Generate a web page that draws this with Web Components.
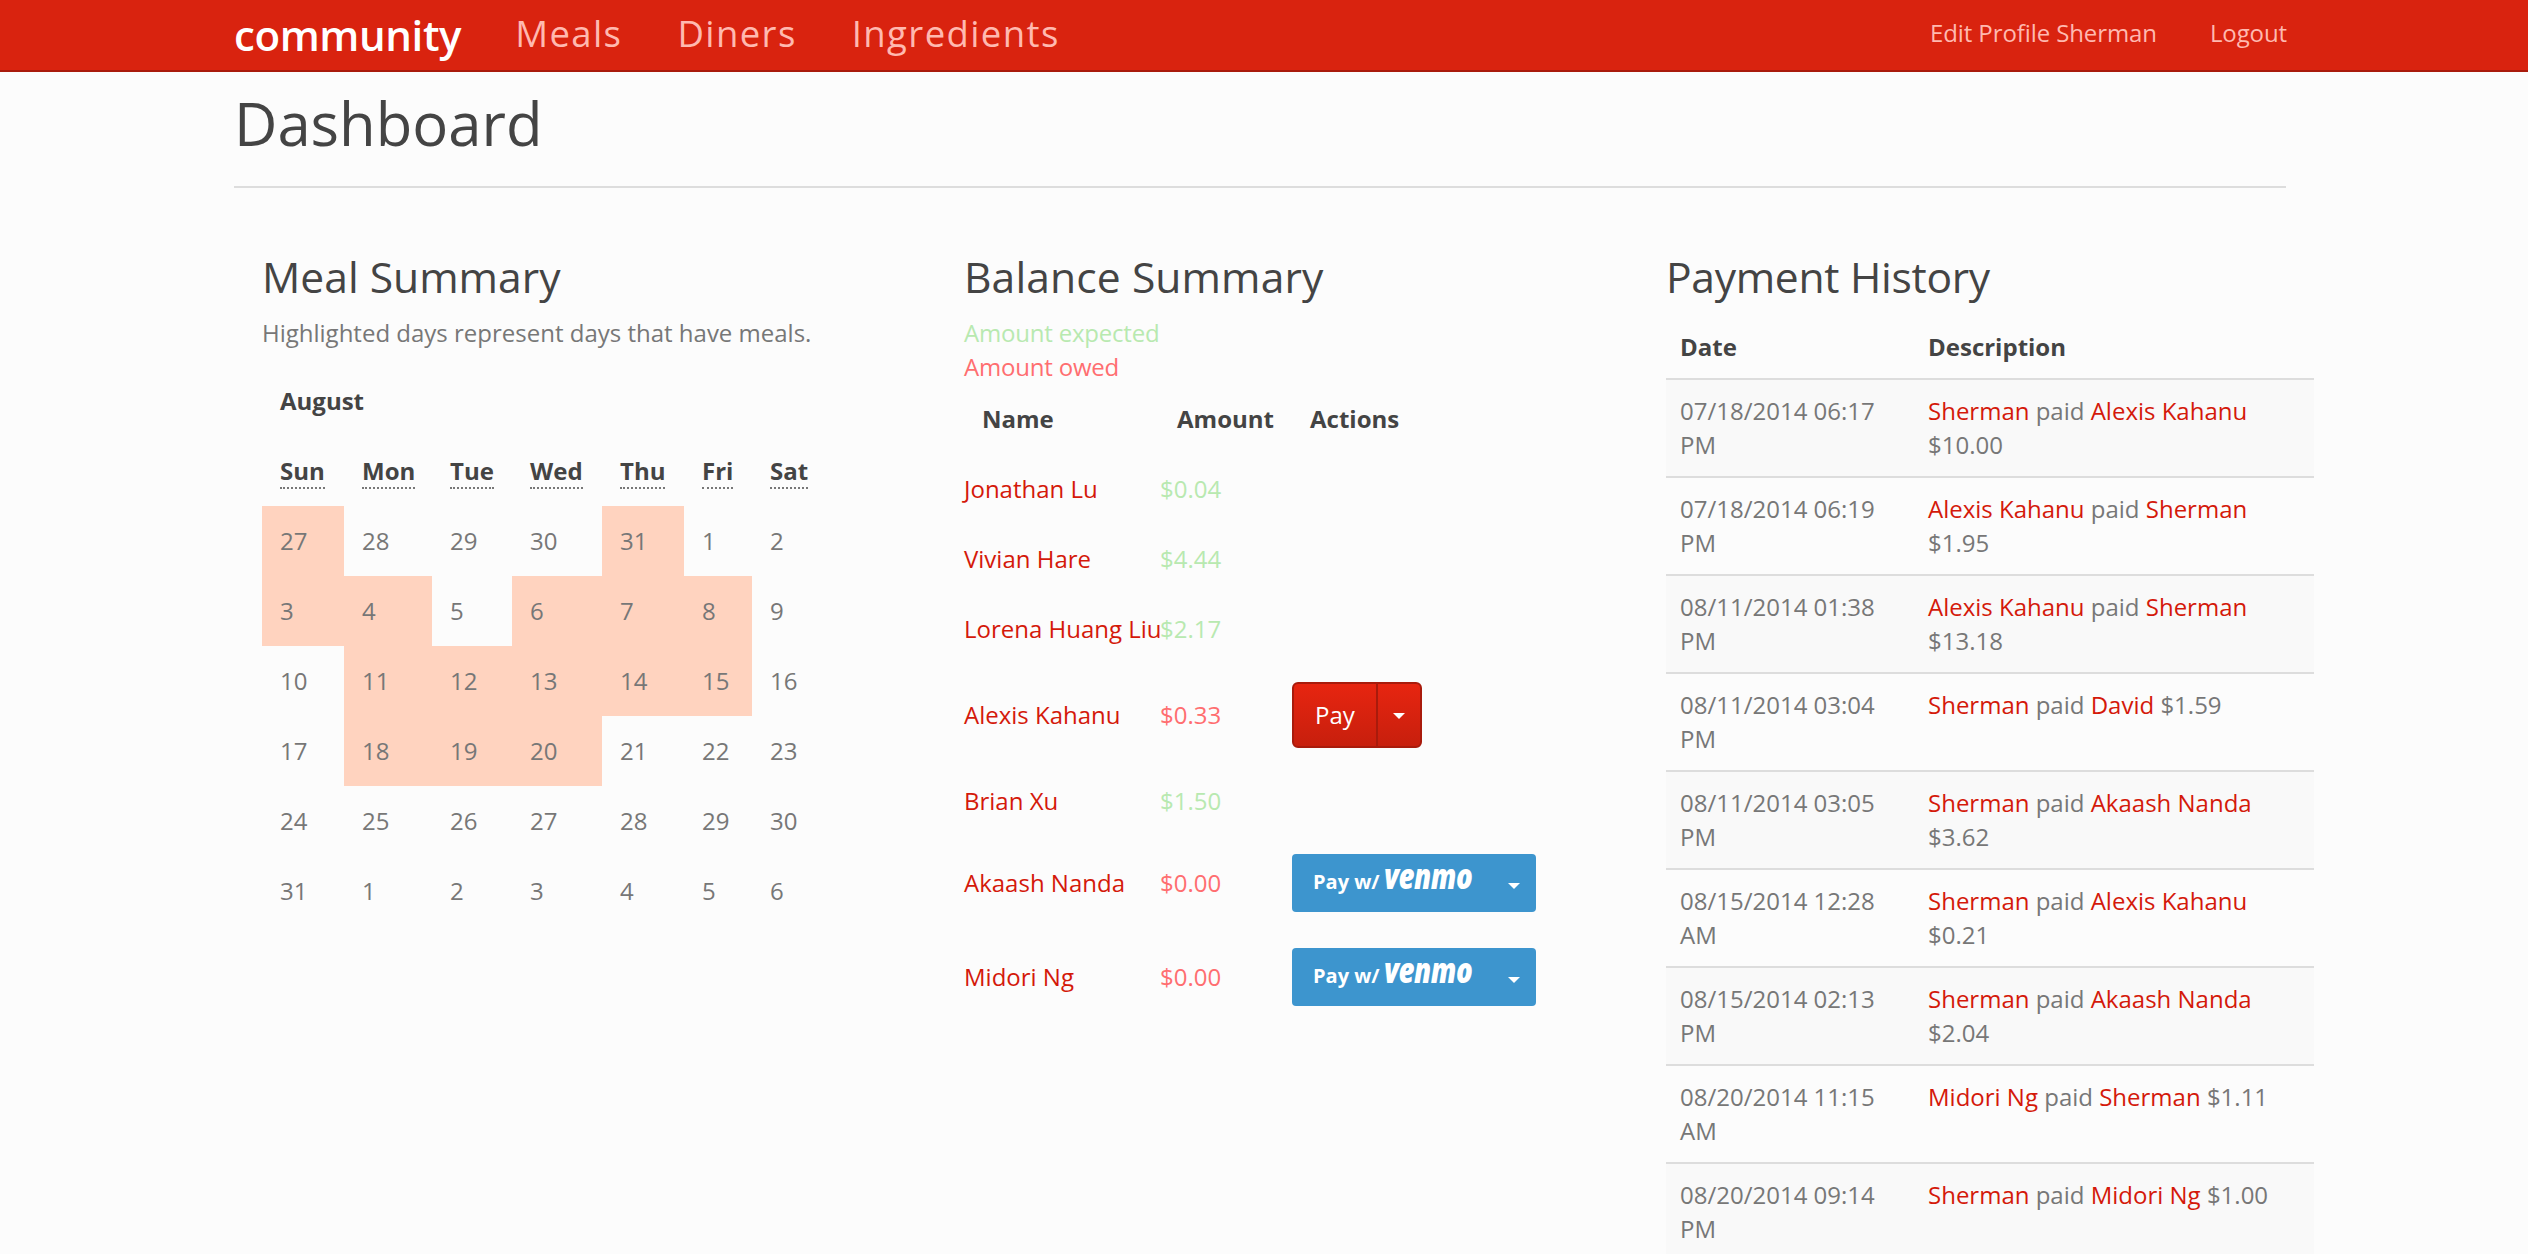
<!DOCTYPE html>
<html>
<head>
<meta charset="utf-8">
<title>Dashboard</title>
<style>
    html, body {
        margin: 0;
        padding: 0;
        height: 1254px;
        overflow: hidden;
        background-color: #fcfcfc;
        color: #777;
        font-family: "Open Sans", "Liberation Sans", sans-serif;
        font-size: 24px;
        line-height: 34px;
    }
    main {
        display: block;
        padding-left: 234px;
    }
</style>
</head>
<body>
<app-navbar></app-navbar>
<main>
    <page-header>Dashboard</page-header>
    <dash-columns>
        <meal-summary></meal-summary>
        <balance-summary></balance-summary>
        <payment-history></payment-history>
    </dash-columns>
</main>

<script>
class AppNavbar extends HTMLElement {
    connectedCallback() {
        this.attachShadow({ mode: 'open' });
        this.shadowRoot.innerHTML = `
            <style>
                :host {
                    display: block;
                    background-color: #d9230f;
                    border-bottom: 2px solid #a91b0c;
                    height: 70px;
                }
                nav {
                    display: flex;
                    align-items: flex-start;
                    width: 2053px;
                    margin-left: 234px;
                    height: 70px;
                }
                a { text-decoration: none; color: #ffb9b0; }
                .brand {
                    color: #fff;
                    font-size: 42px;
                    font-weight: 600;
                    line-height: 70px;
                    margin-right: 54px;
                    letter-spacing: -0.4px;
                }
                .main-links { display: flex; gap: 55px; font-size: 36.5px; line-height: 67px; letter-spacing: 1.4px; }
                .right { display: flex; gap: 53px; margin-left: auto; font-size: 24px; line-height: 65px; letter-spacing: -0.1px; }
            </style>
            <nav>
                <a class="brand" href="#">community</a>
                <div class="main-links">
                    <a href="#">Meals</a>
                    <a href="#">Diners</a>
                    <a href="#">Ingredients</a>
                </div>
                <div class="right">
                    <a href="#">Edit Profile Sherman</a>
                    <a href="#">Logout</a>
                </div>
            </nav>
        `;
    }
}

class PageHeader extends HTMLElement {
    connectedCallback() {
        this.attachShadow({ mode: 'open' });
        this.shadowRoot.innerHTML = `
            <style>
                :host {
                    display: block;
                    width: 2052px;
                    height: 96px;
                    border-bottom: 2px solid #ddd;
                    color: #444;
                    font-size: 59.8px;
                    line-height: 66px;
                    padding-top: 18px;
                }
            </style>
            <slot></slot>
        `;
    }
}

class DashColumns extends HTMLElement {
    connectedCallback() {
        this.attachShadow({ mode: 'open' });
        this.shadowRoot.innerHTML = `
            <style>
                :host {
                    display: grid;
                    grid-template-columns: repeat(3, 702px);
                    width: 2106px;
                    padding-top: 58px;
                }
                ::slotted(*) { padding: 0 28px; }
            </style>
            <slot></slot>
        `;
    }
}

const HEADING_CSS = `
    h3 {
        margin: 0;
        height: 70px;
        color: #444;
        font-size: 42.6px;
        font-weight: 400;
        line-height: 60px;
    }
    a { color: #d4190a; text-decoration: none; }
    table { border-collapse: collapse; border-spacing: 0; table-layout: fixed; }
    th { color: #444; font-weight: 700; text-align: left; }
`;

class MealSummary extends HTMLElement {
    connectedCallback() {
        const days = ['Sun', 'Mon', 'Tue', 'Wed', 'Thu', 'Fri', 'Sat'];
        const weeks = [
            [[27, 1], [28], [29], [30], [31, 1], [1], [2]],
            [[3, 1], [4, 1], [5], [6, 1], [7, 1], [8, 1], [9]],
            [[10], [11, 1], [12, 1], [13, 1], [14, 1], [15, 1], [16]],
            [[17], [18, 1], [19, 1], [20, 1], [21], [22], [23]],
            [[24], [25], [26], [27], [28], [29], [30]],
            [[31], [1], [2], [3], [4], [5], [6]]
        ];
        this.attachShadow({ mode: 'open' });
        this.shadowRoot.innerHTML = `
            <style>
                :host { display: block; }
                ${HEADING_CSS}
                p { margin: 0 0 16px; }
                table { width: 564px; }
                th, td { padding: 18px; line-height: 34px; }
                .meal { background-color: #ffd3bf; }
                abbr { border-bottom: 2px dotted #777; text-decoration: none; }
            </style>
            <h3>Meal Summary</h3>
            <p>Highlighted days represent days that have meals.</p>
            <table>
                <colgroup>
                    <col style="width:82px"><col style="width:88px"><col style="width:80px"><col style="width:90px"><col style="width:82px"><col style="width:68px"><col style="width:74px">
                </colgroup>
                <thead>
                    <tr><th colspan="7">August</th></tr>
                    <tr>${days.map(d => `<th><abbr>${d}</abbr></th>`).join('')}</tr>
                </thead>
                <tbody>
                    ${weeks.map(w => `<tr>${w.map(c => `<td class="${c[1] ? 'meal' : ''}">${c[0]}</td>`).join('')}</tr>`).join('')}
                </tbody>
            </table>
        `;
    }
}

class PayButton extends HTMLElement {
    connectedCallback() {
        this.attachShadow({ mode: 'open' });
        this.shadowRoot.innerHTML = `
            <style>
                :host {
                    display: inline-flex;
                    vertical-align: top;
                    height: 66px;
                    width: 130px;
                    box-sizing: border-box;
                    border: 2px solid #a91b0c;
                    border-radius: 6px;
                    background: linear-gradient(#e72510, #c71f0d);
                    color: #fff;
                    line-height: 62px;
                    font-weight: 500;
                    overflow: hidden;
                }
                .label { width: 82px; text-align: center; border-right: 2px solid #a91b0c; }
                .toggle { flex: 1; display: flex; align-items: center; justify-content: center; }
                i { border-top: 6px solid #fff; border-left: 6px solid transparent; border-right: 6px solid transparent; margin-top: 2px; }
            </style>
            <div class="label"><slot></slot></div>
            <div class="toggle"><i></i></div>
        `;
    }
}

class VenmoButton extends HTMLElement {
    connectedCallback() {
        this.attachShadow({ mode: 'open' });
        this.shadowRoot.innerHTML = `
            <style>
                :host {
                    display: inline-flex;
                    vertical-align: top;
                    align-items: baseline;
                    height: 58px;
                    width: 244px;
                    box-sizing: border-box;
                    padding-left: 21px;
                    border-radius: 4px;
                    background-color: #3d95ce;
                    color: #fff;
                    line-height: 44px;
                    position: relative;
                }
                .pay { font-size: 20px; font-weight: 700; white-space: pre; }
                .logo {
                    display: inline-block;
                    font-size: 35px;
                    font-weight: 800;
                    font-style: italic;
                    letter-spacing: -0.6px;
                    margin-left: 4px;
                    transform: scaleX(0.79);
                    transform-origin: 0 100%;
                }
                i {
                    position: absolute;
                    right: 16px;
                    top: 29px;
                    border-top: 6px solid #fff;
                    border-left: 6px solid transparent;
                    border-right: 6px solid transparent;
                }
            </style>
            <span class="pay">Pay w/</span><span class="logo">venmo</span><i></i>
        `;
    }
}

class BalanceSummary extends HTMLElement {
    connectedCallback() {
        const rows = [
            ['Jonathan Lu', '$0.04', 'in', ''],
            ['Vivian Hare', '$4.44', 'in', ''],
            ['Lorena Huang Liu', '$2.17', 'in', ''],
            ['Alexis Kahanu', '$0.33', 'out', '<pay-button>Pay</pay-button>'],
            ['Brian Xu', '$1.50', 'in', ''],
            ['Akaash Nanda', '$0.00', 'out', '<venmo-button></venmo-button>'],
            ['Midori Ng', '$0.00', 'out', '<venmo-button></venmo-button>']
        ];
        this.attachShadow({ mode: 'open' });
        this.shadowRoot.innerHTML = `
            <style>
                :host { display: block; }
                ${HEADING_CSS}
                h3 { letter-spacing: 0.1px; }
                .in { color: #b8e9b0; }
                .out { color: #ff6e70; }
                .legend div { height: 34px; letter-spacing: -0.2px; }
                table { width: 580px; }
                th { padding: 18px; line-height: 34px; }
                td { padding: 18px 0; line-height: 34px; white-space: nowrap; vertical-align: middle; }
                td.action { line-height: 0; }
                th.amount { padding-left: 18px; }
                td.in, td.out { padding-left: 1px; }
            </style>
            <h3>Balance Summary</h3>
            <div class="legend">
                <div class="in">Amount expected</div>
                <div class="out">Amount owed</div>
            </div>
            <table>
                <colgroup><col style="width:195px"><col style="width:133px"><col></colgroup>
                <thead>
                    <tr>
                        <th>Name</th>
                        <th class="amount">Amount</th>
                        <th>Actions</th>
                    </tr>
                </thead>
                <tbody>
                    ${rows.map(r => `
                        <tr>
                            <td><a href="#">${r[0]}</a></td>
                            <td class="${r[2]}">${r[1]}</td>
                            <td class="action">${r[3]}</td>
                        </tr>`).join('')}
                </tbody>
            </table>
        `;
    }
}

class PaymentHistory extends HTMLElement {
    connectedCallback() {
        const a = name => `<a href="#">${name}</a>`;
        const rows = [
            ['07/18/2014 06:17 PM', 'Sherman', 'Alexis Kahanu', '$10.00'],
            ['07/18/2014 06:19 PM', 'Alexis Kahanu', 'Sherman', '$1.95'],
            ['08/11/2014 01:38 PM', 'Alexis Kahanu', 'Sherman', '$13.18'],
            ['08/11/2014 03:04 PM', 'Sherman', 'David', '$1.59'],
            ['08/11/2014 03:05 PM', 'Sherman', 'Akaash Nanda', '$3.62'],
            ['08/15/2014 12:28 AM', 'Sherman', 'Alexis Kahanu', '$0.21'],
            ['08/15/2014 02:13 PM', 'Sherman', 'Akaash Nanda', '$2.04'],
            ['08/20/2014 11:15 AM', 'Midori Ng', 'Sherman', '$1.11'],
            ['08/20/2014 09:14 PM', 'Sherman', 'Midori Ng', '$1.00']
        ];
        this.attachShadow({ mode: 'open' });
        this.shadowRoot.innerHTML = `
            <style>
                :host { display: block; }
                ${HEADING_CSS}
                h3 { letter-spacing: -0.3px; }
                table { width: 648px; }
                th, td { padding: 14px; line-height: 34px; vertical-align: top; }
                thead th { border-bottom: 2px solid #ddd; }
                td { border-top: 2px solid #ddd; }
                tbody tr:first-child td { border-top: 0; }
                tbody tr:nth-child(odd) td { background-color: #f9f9f9; }
            </style>
            <h3>Payment History</h3>
            <table>
                <colgroup><col style="width:248px"><col></colgroup>
                <thead><tr><th>Date</th><th>Description</th></tr></thead>
                <tbody>
                    ${rows.map(r => `
                        <tr>
                            <td>${r[0]}</td>
                            <td>${a(r[1])} paid ${a(r[2])} ${r[3]}</td>
                        </tr>`).join('')}
                </tbody>
            </table>
        `;
    }
}

customElements.define('app-navbar', AppNavbar);
customElements.define('page-header', PageHeader);
customElements.define('dash-columns', DashColumns);
customElements.define('meal-summary', MealSummary);
customElements.define('pay-button', PayButton);
customElements.define('venmo-button', VenmoButton);
customElements.define('balance-summary', BalanceSummary);
customElements.define('payment-history', PaymentHistory);
</script>
</body>
</html>
